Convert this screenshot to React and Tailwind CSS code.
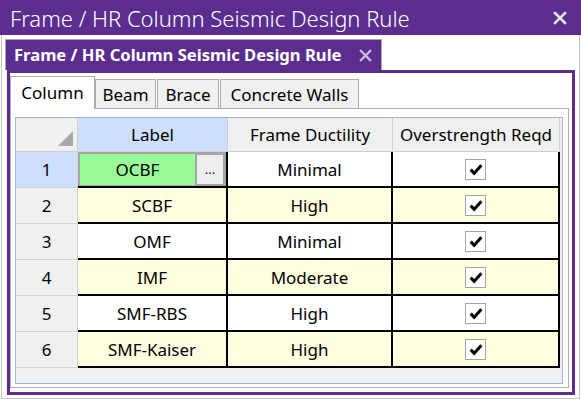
import React from "react";

const rows = [
  { n: 1, label: "OCBF", duct: "Minimal" },
  { n: 2, label: "SCBF", duct: "High" },
  { n: 3, label: "OMF", duct: "Minimal" },
  { n: 4, label: "IMF", duct: "Moderate" },
  { n: 5, label: "SMF-RBS", duct: "High" },
  { n: 6, label: "SMF-Kaiser", duct: "High" },
];

const CloseX = ({ size, color, stroke }) => (
  <svg width={size} height={size} viewBox="0 0 14 14">
    <path d="M2 2 L12 12 M12 2 L2 12" stroke={color} strokeWidth={stroke} strokeLinecap="square" fill="none" />
  </svg>
);

const Check = () => (
  <div className="w-[21px] h-[21px] bg-white border border-[#a5a5a5] flex items-center justify-center">
    <svg width="14" height="13" viewBox="0 0 14 13">
      <path d="M1.6 6.6 L5.2 10.2 L12.4 2.2" stroke="#000" strokeWidth="3" fill="none" />
    </svg>
  </div>
);

export default function App() {
  return (
    <div className="w-[581px] h-[401px] bg-white overflow-hidden" style={{ fontFamily: '"Noto Sans", "Open Sans", sans-serif' }}>
      {/* window title */}
      <div className="h-[35px] bg-[#5a2d8f] flex items-center pl-[10px] pr-[14px]">
        <span className="flex-1 text-white text-[22px] font-light leading-none">Frame / HR Column Seismic Design Rule</span>
        <CloseX size={14} color="#e4e4e4" stroke={2.6} />
      </div>

      <div className="mx-[1px] h-[364px] border-x border-b border-[#c4c4c4] pt-[4px]">
        {/* document tab */}
        <div className="ml-[3px] w-[377px] h-[31px] bg-[#5a2d8f] border border-b-0 border-[#a8a8a8] flex items-center pl-[8px] pr-[9px]">
          <span className="flex-1 text-white text-[16.6px] font-bold leading-none whitespace-nowrap">Frame / HR Column Seismic Design Rule</span>
          <CloseX size={13} color="#c9bfe3" stroke={2.4} />
        </div>

        {/* panel */}
        <div className="ml-[5px] w-[568px] h-[325px] border-[3px] border-[#5a2d8f] bg-white pt-[3px]">
          {/* tab strip */}
          <div className="flex items-end h-[32px] text-[17px] text-black leading-none">
            <div className="relative z-10 h-[33px] -mb-[1px] w-[85px] bg-white border border-b-0 border-[#acacac] flex items-center justify-center pb-[2px]">
              Column
            </div>
            <div className="h-[29px] w-[61px] bg-[#f0f0f0] border border-b-0 border-[#acacac] flex items-center justify-center">
              Beam
            </div>
            <div className="ml-[1px] h-[29px] w-[62px] bg-[#f0f0f0] border border-b-0 border-[#acacac] flex items-center justify-center">
              Brace
            </div>
            <div className="ml-[1px] h-[29px] w-[139px] bg-[#f0f0f0] border border-b-0 border-[#acacac] flex items-center justify-center">
              Concrete Walls
            </div>
          </div>

          {/* tab content */}
          <div className="w-[559px] h-[280px] border border-[#acacac] bg-white pl-[4px] pt-[8px]">
            <div className="w-[548px] h-[267px] border border-[#a4b5cb] bg-[#f0f0f0] text-[17px] text-black leading-none">
              {/* header */}
              <div className="flex h-[34px]">
                <div className="w-[62px] h-full border-r border-b border-[#cfcfcf] relative">
                  <div className="absolute right-[4px] bottom-[5px] w-0 h-0 border-l-[15px] border-l-transparent border-b-[15px] border-b-[#a9a9a9]" />
                </div>
                <div className="w-[150px] h-full bg-[#cddffa] border-r border-b border-[#cfcfcf] flex items-center justify-center">Label</div>
                <div className="w-[165px] h-full border-r border-b border-[#cfcfcf] flex items-center justify-center">Frame Ductility</div>
                <div className="w-[167px] h-full border-r border-b border-[#cfcfcf] flex items-center justify-center">Overstrength Reqd</div>
              </div>

              {rows.map((r) => {
                const bg = r.n % 2 === 0 ? "bg-[#ffffe0]" : "bg-white";
                return (
                  <div key={r.n} className="flex h-[36px]">
                    <div className={`w-[62px] h-full border-r border-b border-[#d2d2d2] flex items-center justify-center ${r.n === 1 ? "bg-[#cddffa]" : "bg-[#f0f0f0]"}`}>
                      {r.n}
                    </div>
                    {r.n === 1 ? (
                      <div className="w-[150px] h-full border-b-2 border-black bg-[#a6a6a6] flex pl-[2px] pt-[2px] pb-[1px] pr-[5px] gap-[2px]">
                        <div className="flex-1 bg-[#98fb98] flex items-center justify-center">{r.label}</div>
                        <div className="w-[26px] my-[1px] bg-[#eeeeee] flex items-end justify-center pb-[8px] text-[13px] text-[#222]">...</div>
                      </div>
                    ) : (
                      <div className={`w-[150px] h-full border-r-2 border-b-2 border-black flex items-center justify-center ${bg}`}>{r.label}</div>
                    )}
                    <div className={`w-[165px] h-full border-r-2 border-b-2 border-black flex items-center justify-center ${r.n === 1 ? "border-l-2 -ml-[2px] w-[167px]" : ""} ${bg}`}>{r.duct}</div>
                    <div className={`w-[167px] h-full border-r-2 border-b-2 border-black flex items-center justify-center ${bg}`}>
                      <Check />
                    </div>
                  </div>
                );
              })}
            </div>
          </div>
        </div>
      </div>
    </div>
  );
}
